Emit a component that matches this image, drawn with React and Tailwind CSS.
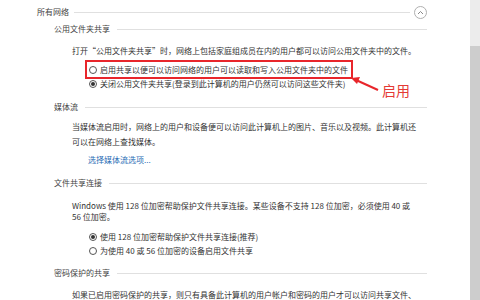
import React from 'react';

// 单选框
const Radio = ({ checked }) => (
  <span className="w-[8px] h-[8px] rounded-full border border-[#555] bg-white flex items-center justify-center shrink-0">
    {checked && <span className="w-[4px] h-[4px] rounded-full bg-[#333]" />}
  </span>
);

// 分组标题 + 横线
const SectionHeader = ({ title, className = '' }) => (
  <div className={`h-[10px] pl-[54px] flex items-center gap-[7px] ${className}`}>
    <span className="text-[#444] whitespace-nowrap">{title}</span>
    <div className="flex-1 h-px bg-[#e0e0e0]" />
  </div>
);

const RadioRow = ({ checked, children, className = '' }) => (
  <div className={`h-[10px] flex items-center gap-[3px] whitespace-nowrap ${className}`}>
    <Radio checked={checked} />
    <span>{children}</span>
  </div>
);

const App = () => {
  return (
    <div
      className="w-[480px] h-[300px] bg-white flex overflow-hidden"
      style={{ fontFamily: '"Noto Sans CJK SC", "Noto Sans", sans-serif' }}
    >
      <div className="flex-1 relative pr-[43px] text-[8px] leading-[10px] text-[#333]">
        {/* 所有网络 */}
        <div className="h-[24px] pl-[37px] flex items-center">
          <span className="text-[#444] whitespace-nowrap">所有网络</span>
          <div className="flex-1 h-px bg-[#e0e0e0] ml-[5px]" />
          <span className="ml-[4px] w-[13px] h-[13px] rounded-full border border-[#b0b0b0] flex items-center justify-center">
            <svg width="7" height="5" viewBox="0 0 7 5">
              <path d="M1 4 L3.5 1.5 L6 4" fill="none" stroke="#888" strokeWidth="1" />
            </svg>
          </span>
        </div>

        {/* 公用文件夹共享 */}
        <SectionHeader title="公用文件夹共享" />
        <p className="mt-[12px] pl-[72px] whitespace-nowrap">
          打开“公用文件夹共享”时，网络上包括家庭组成员在内的用户都可以访问公用文件夹中的文件。
        </p>
        <div className="mt-[4px] ml-[85px] w-[268px] h-[19px] border-2 border-[#e8262b] pl-[2px] flex items-center">
          <RadioRow>启用共享以便可以访问网络的用户可以读取和写入公用文件夹中的文件</RadioRow>
        </div>
        <RadioRow checked className="pl-[89px]">关闭公用文件夹共享(登录到此计算机的用户仍然可以访问这些文件夹)</RadioRow>

        {/* 媒体流 */}
        <SectionHeader title="媒体流" className="mt-[13px]" />
        <p className="mt-[7px] pl-[72px] leading-[15px] whitespace-nowrap">
          当媒体流启用时，网络上的用户和设备便可以访问此计算机上的图片、音乐以及视频。此计算机还
          <br />
          可以在网络上查找媒体。
        </p>
        <div className="mt-[6px] pl-[88px] h-[10px] text-[#2a6db5]">选择媒体流选项...</div>

        {/* 文件共享连接 */}
        <SectionHeader title="文件共享连接" className="mt-[13px]" />
        <p className="mt-[12px] pl-[72px] leading-[11px] whitespace-nowrap">
          Windows 使用 128 位加密帮助保护文件共享连接。某些设备不支持 128 位加密，必须使用 40 或
          <br />
          56 位加密。
        </p>
        <RadioRow checked className="mt-[10px] pl-[89px]">使用 128 位加密帮助保护文件共享连接(推荐)</RadioRow>
        <RadioRow className="mt-[4px] pl-[89px]">为使用 40 或 56 位加密的设备启用文件共享</RadioRow>

        {/* 密码保护的共享 */}
        <SectionHeader title="密码保护的共享" className="mt-[12px]" />
        <p className="mt-[12px] pl-[72px] whitespace-nowrap">
          如果已启用密码保护的共享，则只有具备此计算机的用户帐户和密码的用户才可以访问共享文件、
        </p>

        {/* 红色标注 */}
        <svg className="absolute left-0 top-0 pointer-events-none" width="470" height="300">
          <line x1="378" y1="90" x2="356" y2="80" stroke="#e8262b" strokeWidth="2" />
          <path d="M351 78 L360 77 L357 84 Z" fill="#e8262b" />
        </svg>
        <span
          className="absolute left-[382px] top-[83px] text-[14px] leading-[18px] text-[#e53935]"
          style={{ fontFamily: '"Liberation Serif", "Noto Sans CJK SC", serif' }}
        >
          启用
        </span>
      </div>

      {/* 滚动条 */}
      <div className="w-[10px] flex flex-col">
        <div className="h-[46px] bg-[#ececec]" />
        <div className="flex-1 bg-[#cdcdcd]" />
      </div>
    </div>
  );
};

export default App;
